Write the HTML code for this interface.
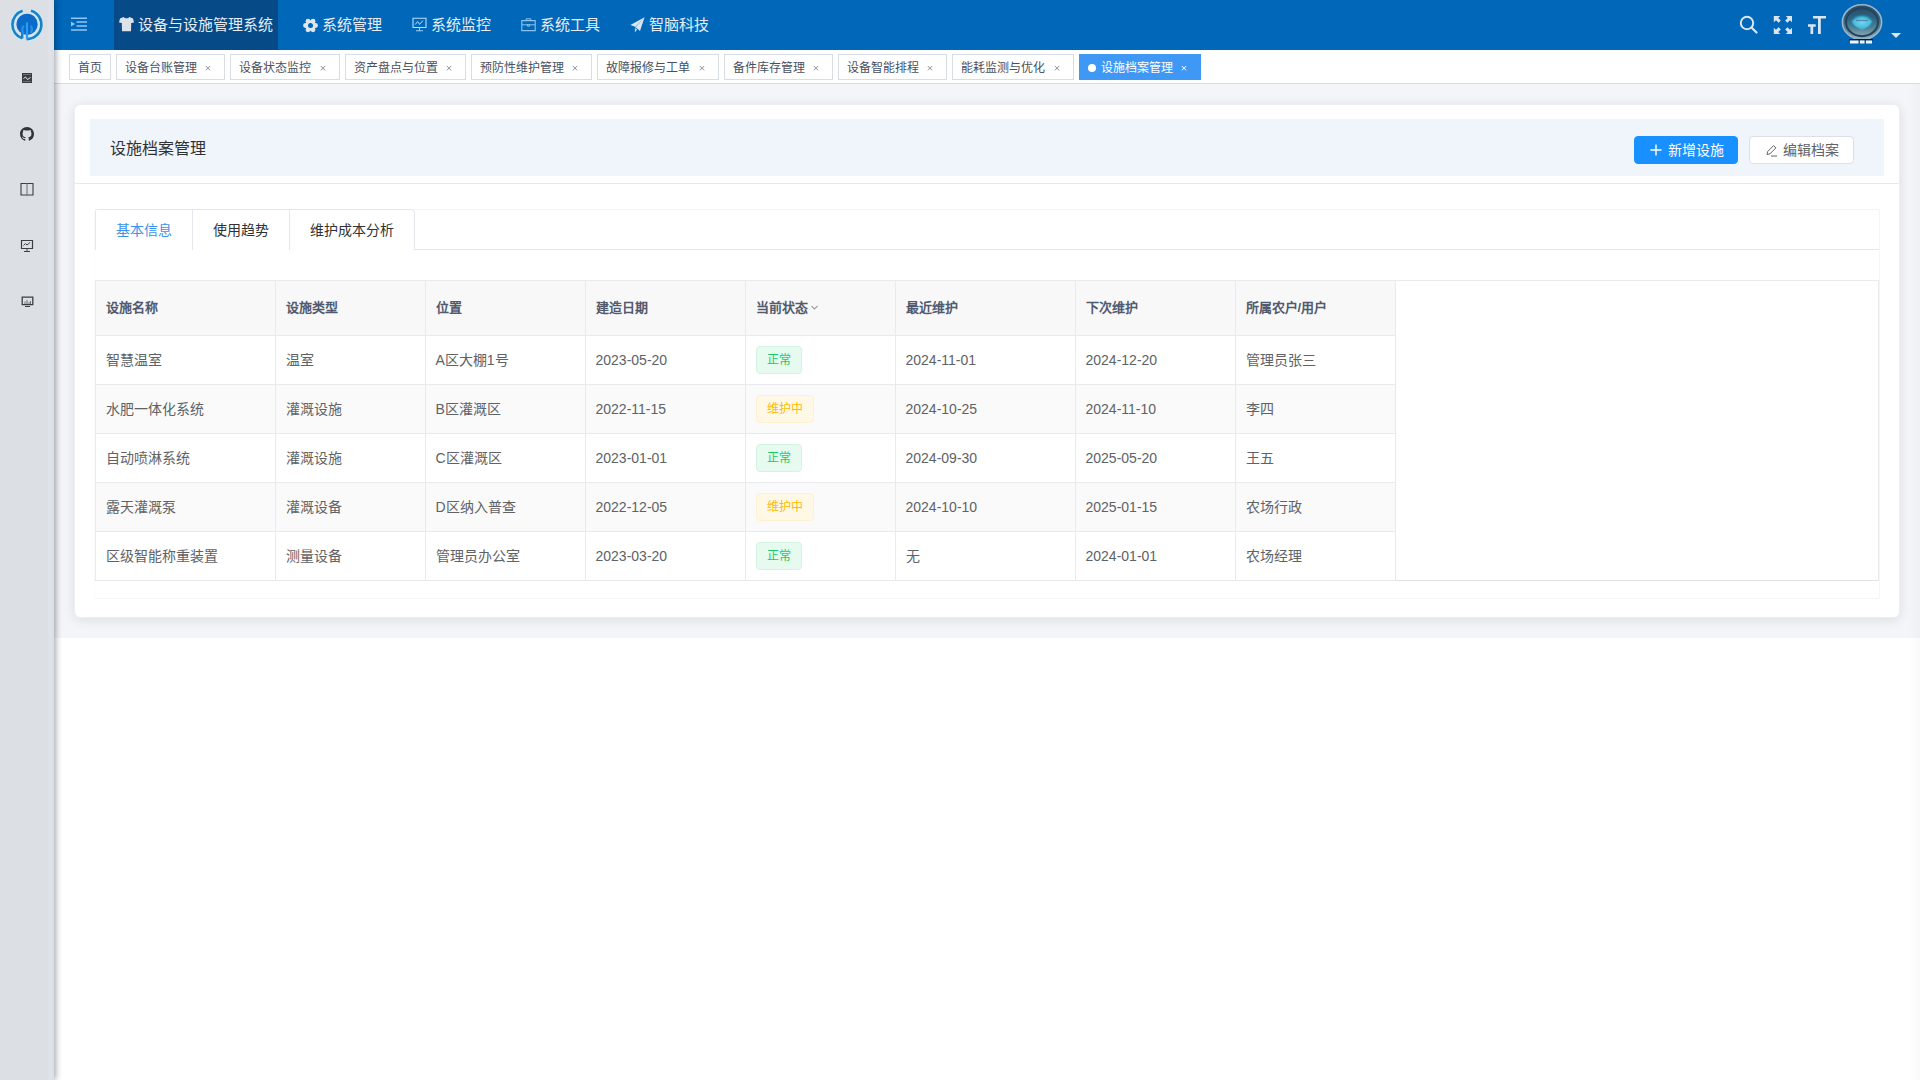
<!DOCTYPE html>
<html lang="zh-CN">
<head>
<meta charset="utf-8">
<title>设施档案管理</title>
<style>
*{box-sizing:border-box;margin:0;padding:0}
html,body{width:1920px;height:1080px;overflow:hidden;background:#fff;font-family:"Liberation Sans",sans-serif;-webkit-font-smoothing:antialiased}
.abs{position:absolute}
#sidebar{position:absolute;left:0;top:0;width:54px;height:1080px;background:#dcdfe4;box-shadow:2px 0 6px rgba(0,21,41,.35);z-index:20}
#sidebar .ico{position:absolute;left:0;width:54px;height:56px;display:flex;align-items:center;justify-content:center}
#header{position:absolute;left:54px;top:0;width:1866px;height:50px;background:#0067b9;z-index:5}
.menu{position:absolute;top:-2px;height:50px;display:flex;align-items:center;color:#e6edf5;font-size:15px;white-space:nowrap}
.menu svg{display:block;margin-right:4px;position:relative;top:1px}
#tags{position:absolute;left:54px;top:50px;width:1866px;height:34px;background:#fff;border-bottom:1px solid #d9dbdf;z-index:4;display:flex;padding-left:15px}
.tag{display:inline-block;flex:none;overflow:hidden;height:26px;line-height:26px;margin-top:4px;margin-left:5px;padding:0 8px;border:1px solid #d8dce5;color:#495060;background:#fff;font-size:12px;white-space:pre}
.tag:first-child{margin-left:0}
.tag .x{display:inline-block;width:16px;height:16px;vertical-align:-4px;position:relative}
.tag .x svg{position:absolute;left:0;top:0}
.tag.active{background:#4098f5;border-color:#4098f5;color:#fff}
.tag.active .dot{display:inline-block;width:8px;height:8px;border-radius:50%;background:#fff;margin-right:2px;vertical-align:0}
#main{position:absolute;left:54px;top:84px;width:1866px;height:554px;background:#f4f5f8}
#card{position:absolute;left:74px;top:104px;width:1826px;height:514px;background:#fff;border:1px solid #ebeef5;border-radius:6px;box-shadow:0 2px 12px 0 rgba(0,0,0,.1);z-index:2}
#chead{position:absolute;left:90px;top:119px;width:1794px;height:57px;background:#f0f4fb;z-index:3}
#chead .title{position:absolute;left:20px;top:1px;line-height:57px;font-size:16px;color:#303133}
.btn{position:absolute;top:136px;height:28px;border-radius:4px;font-size:14px;display:flex;align-items:center;white-space:nowrap;z-index:4}
.btn.primary{left:1634px;width:104px;background:#1890ff;color:#fff;border:1px solid #1890ff}
.btn.plain{left:1749px;width:105px;background:#fff;color:#606266;border:1px solid #dcdfe6}
#cline{position:absolute;left:75px;top:183px;width:1824px;height:1px;background:#e8e9ec;z-index:3}
#tabs{position:absolute;left:95px;top:209px;width:1784px;height:41px;z-index:3}
#tabs .bar{position:absolute;left:0;top:40px;width:1784px;height:1px;background:#e4e7ed}
#tabs .nav{position:absolute;left:0;top:0;height:41px;border:1px solid #e4e7ed;border-bottom:none;border-radius:4px 4px 0 0;display:flex;background:#fff}
#tabs .tab{flex:none;overflow:hidden;height:40px;line-height:40px;padding:0 20px;font-size:14px;color:#303133;border-left:1px solid #e4e7ed;white-space:nowrap}
#tabs .tab:first-child{border-left:none}
#tabs .tab.on{color:#3b92ec;height:41px;background:#fff}
#tbl{position:absolute;left:95px;top:280px;width:1784px;height:301px;border:1px solid #e8eaee;border-bottom-color:#e0e2e6;z-index:3;background:#fff}
table{border-collapse:collapse;table-layout:fixed;font-size:14px;color:#606266}
th{background:#f8f8f9;color:#515a6e;font-size:13px;font-weight:bold;text-align:left;height:54px;padding:0 10px 2px;border-right:1px solid #e8eaee;border-bottom:1px solid #e8eaee;white-space:nowrap}
td{height:49px;padding:0 10px 2px;border-right:1px solid #e8eaee;border-bottom:1px solid #e8eaee;white-space:nowrap}
tr.s td{background:#fafafa}
td.n{padding-bottom:0}
.st{position:relative;top:1px;display:inline-block;height:28px;line-height:26px;padding:0 10px;font-size:12px;border-radius:4px;border:1px solid}
.st.ok{background:#e7faf0;border-color:#d0f5e0;color:#13ce66}
.st.wip{background:#fff8e6;border-color:#fff1cc;color:#ffba00}
</style>
</head>
<body>
<div id="sidebar">
  <div class="abs" style="left:48px;top:0;width:4px;height:1080px;background:#dfe2e9"></div>
  <div class="abs" style="left:0;top:0;width:54px;height:50px">
    <svg class="abs" style="left:0;top:0" width="54" height="50" viewBox="0 0 54 50">
      <path d="M22.6 10.75 A14.5 14.5 0 0 0 22.2 38.3" fill="none" stroke="#c8ecfb" stroke-width="5"/>
      <path d="M31 10.7 A14.5 14.5 0 0 1 26.8 39.1" fill="none" stroke="#c8ecfb" stroke-width="5"/>
      <path d="M22.6 10.75 A14.5 14.5 0 0 0 22.2 38.3" fill="none" stroke="#1c80c2" stroke-width="2.6"/>
      <path d="M31 10.7 A14.5 14.5 0 0 1 26.8 39.1" fill="none" stroke="#1c80c2" stroke-width="2.6"/>
      <circle cx="27.1" cy="24.3" r="10.6" fill="#0b6bc9"/>
      <path d="M22.2 38.5 V33" stroke="#1c80c2" stroke-width="2.4"/>
      <path d="M27 39.5 V22.5" stroke="#2c9cf0" stroke-width="2.2"/>
      <path d="M23.5 33.5 C21.8 30 22 27.5 23.8 25.8 M30.8 33 C32.5 30 32.3 27.5 30.5 25.8" fill="none" stroke="#2590e6" stroke-width="2.2"/>
    </svg>
  </div>
  <div class="ico" style="top:50px">
    <svg width="12" height="12" viewBox="0 0 12 12"><rect x="1" y="1" width="10" height="10" fill="#3b3f45"/><path d="M2.5 6.5 L4.5 5 L6.5 7.5 L9.5 5.5" stroke="#e8eaee" stroke-width="1" fill="none"/><path d="M2 2.5H10M2 9.5H10" stroke="#6b7078" stroke-width="1"/></svg>
  </div>
  <div class="ico" style="top:106px">
    <svg width="14" height="14" viewBox="0 0 16 16"><path fill="#303338" d="M8 0C3.58 0 0 3.58 0 8c0 3.54 2.29 6.53 5.47 7.59.4.07.55-.17.55-.38 0-.19-.01-.82-.01-1.49-2.01.37-2.53-.49-2.69-.94-.09-.23-.48-.94-.82-1.13-.28-.15-.68-.52-.01-.53.63-.01 1.08.58 1.23.82.72 1.21 1.87.87 2.33.66.07-.52.28-.87.51-1.07-1.78-.2-3.640-.89-3.64-3.95 0-.87.31-1.59.82-2.15-.08-.2-.36-1.02.08-2.12 0 0 .67-.21 2.2.82.64-.18 1.32-.27 2-.27.68 0 1.36.09 2 .27 1.53-1.04 2.2-.82 2.2-.82.44 1.1.16 1.92.08 2.12.51.56.82 1.27.82 2.15 0 3.07-1.87 3.75-3.65 3.95.29.25.54.73.54 1.48 0 1.07-.01 1.93-.01 2.2 0 .21.15.46.55.38A8.013 8.013 0 0016 8c0-4.42-3.58-8-8-8z"/></svg>
  </div>
  <div class="ico" style="top:162px">
    <svg width="14" height="15" viewBox="0 0 14 15" style="margin-top:-1px"><path d="M1 1.5H13V13H1Z" fill="none" stroke="#3b3f45" stroke-width="1.1"/><path d="M7 1.5V14.2" stroke="#7d8187" stroke-width="1.2"/></svg>
  </div>
  <div class="ico" style="top:218px">
    <svg width="14" height="14" viewBox="0 0 14 14"><path d="M1.5 1.5H12.5V9.5H1.5Z" fill="none" stroke="#3b3f45" stroke-width="1.2"/><path d="M3.5 6.5L5.5 4.5L7 6L10 3.5" fill="none" stroke="#3b3f45" stroke-width="1"/><path d="M7 9.5V12.5M4 12.5H10" stroke="#3b3f45" stroke-width="1"/></svg>
  </div>
  <div class="ico" style="top:274px">
    <svg width="13" height="12" viewBox="0 0 13 12"><path d="M1.2 1.2H11.8V8.6H1.2Z" fill="none" stroke="#3b3f45" stroke-width="1.3"/><path d="M4 8V5.5M6 8V4M8 8V6M9.5 8V5" stroke="#6e737a" stroke-width="1"/><path d="M4 10.5H9" stroke="#3b3f45" stroke-width="1"/></svg>
  </div>
</div>

<div id="header">
  <svg class="abs" style="left:17px;top:17px" width="17" height="15" viewBox="0 0 17 15"><path d="M0 1.2H16M5.5 5H16M5.5 9H16M0 13H16" stroke="#8ec5f4" stroke-width="1.6"/><path d="M0 4.6L4.2 7.1L0 9.6Z" fill="#8ec5f4"/></svg>
  <div class="abs" style="left:60px;top:0;width:164px;height:50px;background:#074a88"></div>
  <div class="menu" style="left:65px">
    <svg width="15" height="16" viewBox="0 0 15 16"><path d="M4.6 1L1 2.6L0 6.5L2.8 7L3 15.2H12L12.2 7L15 6.5L14 2.6L10.4 1C9.8 1.9 8.8 2.3 7.5 2.3S5.2 1.9 4.6 1Z" fill="#dde3ea"/></svg>
    <span>设备与设施管理系统</span>
  </div>
  <div class="menu" style="left:249px">
    <svg width="15" height="15" viewBox="0 0 15 15" style="top:2px"><g fill="#dfe6ee"><circle cx="7.5" cy="7.5" r="5.3"/><circle cx="12.50" cy="7.50" r="2.4"/><circle cx="10.00" cy="11.83" r="2.4"/><circle cx="5.00" cy="11.83" r="2.4"/><circle cx="2.50" cy="7.50" r="2.4"/><circle cx="5.00" cy="3.17" r="2.4"/><circle cx="10.00" cy="3.17" r="2.4"/></g><circle cx="7.5" cy="7.5" r="2.5" fill="#0067b9"/></svg>
    <span>系统管理</span>
  </div>
  <div class="menu" style="left:358px">
    <svg width="15" height="15" viewBox="0 0 15 15" style="margin-top:1px"><path d="M1 1.2H14V10.5H1Z" fill="none" stroke="#b6defa" stroke-width="1.1"/><path d="M3.2 7.5L5.6 4.6L7.6 7.4L10.8 3.6" fill="none" stroke="#b6defa" stroke-width="1"/><path d="M7.5 10.5V13.6M4 13.8H11" stroke="#9fcdf0" stroke-width="1.1"/></svg>
    <span>系统监控</span>
  </div>
  <div class="menu" style="left:467px">
    <svg width="15" height="14" viewBox="0 0 15 14" style="margin-top:2px"><path d="M0.8 2.6H14.2V12.6H0.8Z" fill="none" stroke="#8ec3ef" stroke-width="1.1"/><path d="M5.2 2.6V0.8H9.8V2.6M0.8 6.8H14.2" fill="none" stroke="#8ec3ef" stroke-width="1"/><path d="M6.6 6V8.2H8.4V6" fill="none" stroke="#8ec3ef" stroke-width="1"/></svg>
    <span>系统工具</span>
  </div>
  <div class="menu" style="left:576px">
    <svg width="15" height="16" viewBox="0 0 15 16" style="top:2px"><path d="M14.6 0.3L0.4 8L5.2 9.8L10 14Z" fill="#dae5f0"/><path d="M14.6 0.3L4.9 11.6L5.2 9.8Z" fill="#8fb4d6"/><path d="M5 11L4.8 15.5L7.2 12.6Z" fill="#b7dcf7"/></svg>
    <span>智脑科技</span>
  </div>
  <!-- right icons -->
  <svg class="abs" style="left:1685px;top:15px" width="20" height="20" viewBox="0 0 20 20"><circle cx="8" cy="8" r="6.2" fill="none" stroke="#dbe6f2" stroke-width="2"/><path d="M12.5 12.5L17.5 17.5" stroke="#dbe6f2" stroke-width="2.2" stroke-linecap="round"/></svg>
  <svg class="abs" style="left:1719px;top:15px" width="20" height="20" viewBox="0 0 20 20"><g fill="#dbe6f2"><path d="M0.8 1H7.2L5.2 3L7.8 5.6L5.6 7.8L3 5.2L0.8 7.2Z"/><path d="M19 1V7.2L17 5.2L14.4 7.8L12.2 5.6L14.8 3L12.8 1Z"/><path d="M0.8 19V12.8L3 14.8L5.6 12.2L7.8 14.4L5.2 17L7.2 19Z"/><path d="M19 19H12.8L14.8 17L12.2 14.4L14.4 12.2L17 14.8L19 12.8Z"/></g></svg>
  <svg class="abs" style="left:1753px;top:15px" width="20" height="20" viewBox="0 0 20 20"><g fill="#dbe6f2"><path d="M6 1H19V3.6H13.8V19H11V3.6H6Z"/><path d="M1 9.3H8.7V11.7H6.2V19H3.5V11.7H1Z"/></g></svg>
  <svg class="abs" style="left:1784px;top:0" width="50" height="50" viewBox="0 0 50 50">
    <defs>
      <linearGradient id="avg" x1="0" y1="0" x2="0" y2="1">
        <stop offset="0" stop-color="#2b4862"/><stop offset="0.4" stop-color="#2f6382"/><stop offset="0.7" stop-color="#5b8799"/><stop offset="1" stop-color="#9db4c0"/>
      </linearGradient>
      <radialGradient id="avc" cx="0.5" cy="0.5" r="0.5">
        <stop offset="0" stop-color="#9fe3f7"/><stop offset="0.6" stop-color="#39b6d8"/><stop offset="1" stop-color="#1d5f80" stop-opacity="0"/>
      </radialGradient>
    </defs>
    <ellipse cx="24" cy="22.2" rx="19.6" ry="17.4" fill="url(#avg)" stroke="#9fb6c8" stroke-width="1.6"/>
    <ellipse cx="24" cy="22.2" rx="16" ry="14" fill="none" stroke="#22445c" stroke-width="2"/>
    <ellipse cx="24" cy="22" rx="13" ry="8.5" fill="url(#avc)"/>
    <path d="M13.5 21 Q24 17 34.5 21 Q29 29 24 30 Q19 29 13.5 21Z" fill="#5cc6e6" opacity="0.55"/>
    <path d="M18 20.5 H30" stroke="#3a5f8a" stroke-width="1.2" opacity="0.6"/>
    <rect x="11" y="39" width="24" height="1.4" fill="#0b1a2a"/>
    <path d="M12 42 H20.5 M22 42 H26.5 M28 42 H34" stroke="#eef5fc" stroke-width="3"/>
  </svg>
  <svg class="abs" style="left:1837px;top:33px" width="10" height="6" viewBox="0 0 10 6"><path d="M0 0H10L5 5Z" fill="#dbe6f2"/></svg>
</div>

<div id="tags">
  <span class="tag" style="width:42px">首页</span>
  <span class="tag" style="width:109.33px">设备台账管理 <span class="x"><svg width="16" height="16"><path d="M5.8 6L10.2 10.4M10.2 6L5.8 10.4" stroke="#8a8f99" stroke-width="1"/></svg></span></span>
  <span class="tag" style="width:109.33px">设备状态监控 <span class="x"><svg width="16" height="16"><path d="M5.8 6L10.2 10.4M10.2 6L5.8 10.4" stroke="#8a8f99" stroke-width="1"/></svg></span></span>
  <span class="tag" style="width:121.33px">资产盘点与位置 <span class="x"><svg width="16" height="16"><path d="M5.8 6L10.2 10.4M10.2 6L5.8 10.4" stroke="#8a8f99" stroke-width="1"/></svg></span></span>
  <span class="tag" style="width:121.33px">预防性维护管理 <span class="x"><svg width="16" height="16"><path d="M5.8 6L10.2 10.4M10.2 6L5.8 10.4" stroke="#8a8f99" stroke-width="1"/></svg></span></span>
  <span class="tag" style="width:121.33px">故障报修与工单 <span class="x"><svg width="16" height="16"><path d="M5.8 6L10.2 10.4M10.2 6L5.8 10.4" stroke="#8a8f99" stroke-width="1"/></svg></span></span>
  <span class="tag" style="width:109.33px">备件库存管理 <span class="x"><svg width="16" height="16"><path d="M5.8 6L10.2 10.4M10.2 6L5.8 10.4" stroke="#8a8f99" stroke-width="1"/></svg></span></span>
  <span class="tag" style="width:109.33px">设备智能排程 <span class="x"><svg width="16" height="16"><path d="M5.8 6L10.2 10.4M10.2 6L5.8 10.4" stroke="#8a8f99" stroke-width="1"/></svg></span></span>
  <span class="tag" style="width:121.33px">能耗监测与优化 <span class="x"><svg width="16" height="16"><path d="M5.8 6L10.2 10.4M10.2 6L5.8 10.4" stroke="#8a8f99" stroke-width="1"/></svg></span></span>
  <span class="tag active" style="width:122.67px"><span class="dot"></span> 设施档案管理 <span class="x"><svg width="16" height="16"><path d="M5.8 6L10.2 10.4M10.2 6L5.8 10.4" stroke="#ffffff" stroke-width="1"/></svg></span></span>
</div>

<div id="main"></div>
<div class="abs" style="left:1908px;top:84px;width:12px;height:996px;background:linear-gradient(to right,rgba(0,0,0,0),rgba(0,0,0,.018));z-index:1"></div>
<div id="card"></div>
<div id="chead"><div class="title">设施档案管理</div></div>
<div class="btn primary">
  <svg class="abs" style="left:15px;top:7px" width="12" height="12" viewBox="0 0 12 12"><path d="M6 0.5V11.5M0.5 6H11.5" stroke="#fff" stroke-width="1.4"/></svg>
  <span class="abs" style="left:33px;top:0;line-height:26px">新增设施</span>
</div>
<div class="btn plain">
  <svg class="abs" style="left:15px;top:7px" width="13" height="13" viewBox="0 0 13 13"><path d="M2 10.5L2.6 7.6L8.6 1.6L10.9 3.9L4.9 9.9Z" fill="none" stroke="#606266" stroke-width="1"/><path d="M6 12H12" stroke="#606266" stroke-width="1"/></svg>
  <span class="abs" style="left:33px;top:0;line-height:26px">编辑档案</span>
</div>
<div id="cline"></div>

<div class="abs" style="left:94px;top:209px;width:1786px;height:390px;border:1px solid #f5f5f6;border-left-color:#fbfbfb;border-bottom-color:#f6f6f6;z-index:2"></div>
<div id="tabs">
  <div class="bar"></div>
  <div class="nav">
    <div class="tab on" style="width:96px">基本信息</div>
    <div class="tab" style="width:97px">使用趋势</div>
    <div class="tab" style="width:125px">维护成本分析</div>
  </div>
</div>

<div id="tbl">
<table>
<colgroup><col style="width:179px"><col style="width:150px"><col style="width:160px"><col style="width:160px"><col style="width:150px"><col style="width:180px"><col style="width:160px"><col style="width:160px"></colgroup>
<tr><th>设施名称</th><th>设施类型</th><th>位置</th><th>建造日期</th><th>当前状态<svg width="9" height="9" viewBox="0 0 9 9" style="margin-left:2px;vertical-align:0"><path d="M1.5 3L4.5 6L7.5 3" fill="none" stroke="#9ba0a8" stroke-width="1.1"/></svg></th><th>最近维护</th><th>下次维护</th><th>所属农户/用户</th></tr>
<tr><td>智慧温室</td><td>温室</td><td>A区大棚1号</td><td class="n">2023-05-20</td><td><span class="st ok">正常</span></td><td class="n">2024-11-01</td><td class="n">2024-12-20</td><td>管理员张三</td></tr>
<tr class="s"><td>水肥一体化系统</td><td>灌溉设施</td><td>B区灌溉区</td><td class="n">2022-11-15</td><td><span class="st wip">维护中</span></td><td class="n">2024-10-25</td><td class="n">2024-11-10</td><td>李四</td></tr>
<tr><td>自动喷淋系统</td><td>灌溉设施</td><td>C区灌溉区</td><td class="n">2023-01-01</td><td><span class="st ok">正常</span></td><td class="n">2024-09-30</td><td class="n">2025-05-20</td><td>王五</td></tr>
<tr class="s"><td>露天灌溉泵</td><td>灌溉设备</td><td>D区纳入普查</td><td class="n">2022-12-05</td><td><span class="st wip">维护中</span></td><td class="n">2024-10-10</td><td class="n">2025-01-15</td><td>农场行政</td></tr>
<tr><td>区级智能称重装置</td><td>测量设备</td><td>管理员办公室</td><td class="n">2023-03-20</td><td><span class="st ok">正常</span></td><td>无</td><td class="n">2024-01-01</td><td>农场经理</td></tr>
</table>
</div>
</body>
</html>
